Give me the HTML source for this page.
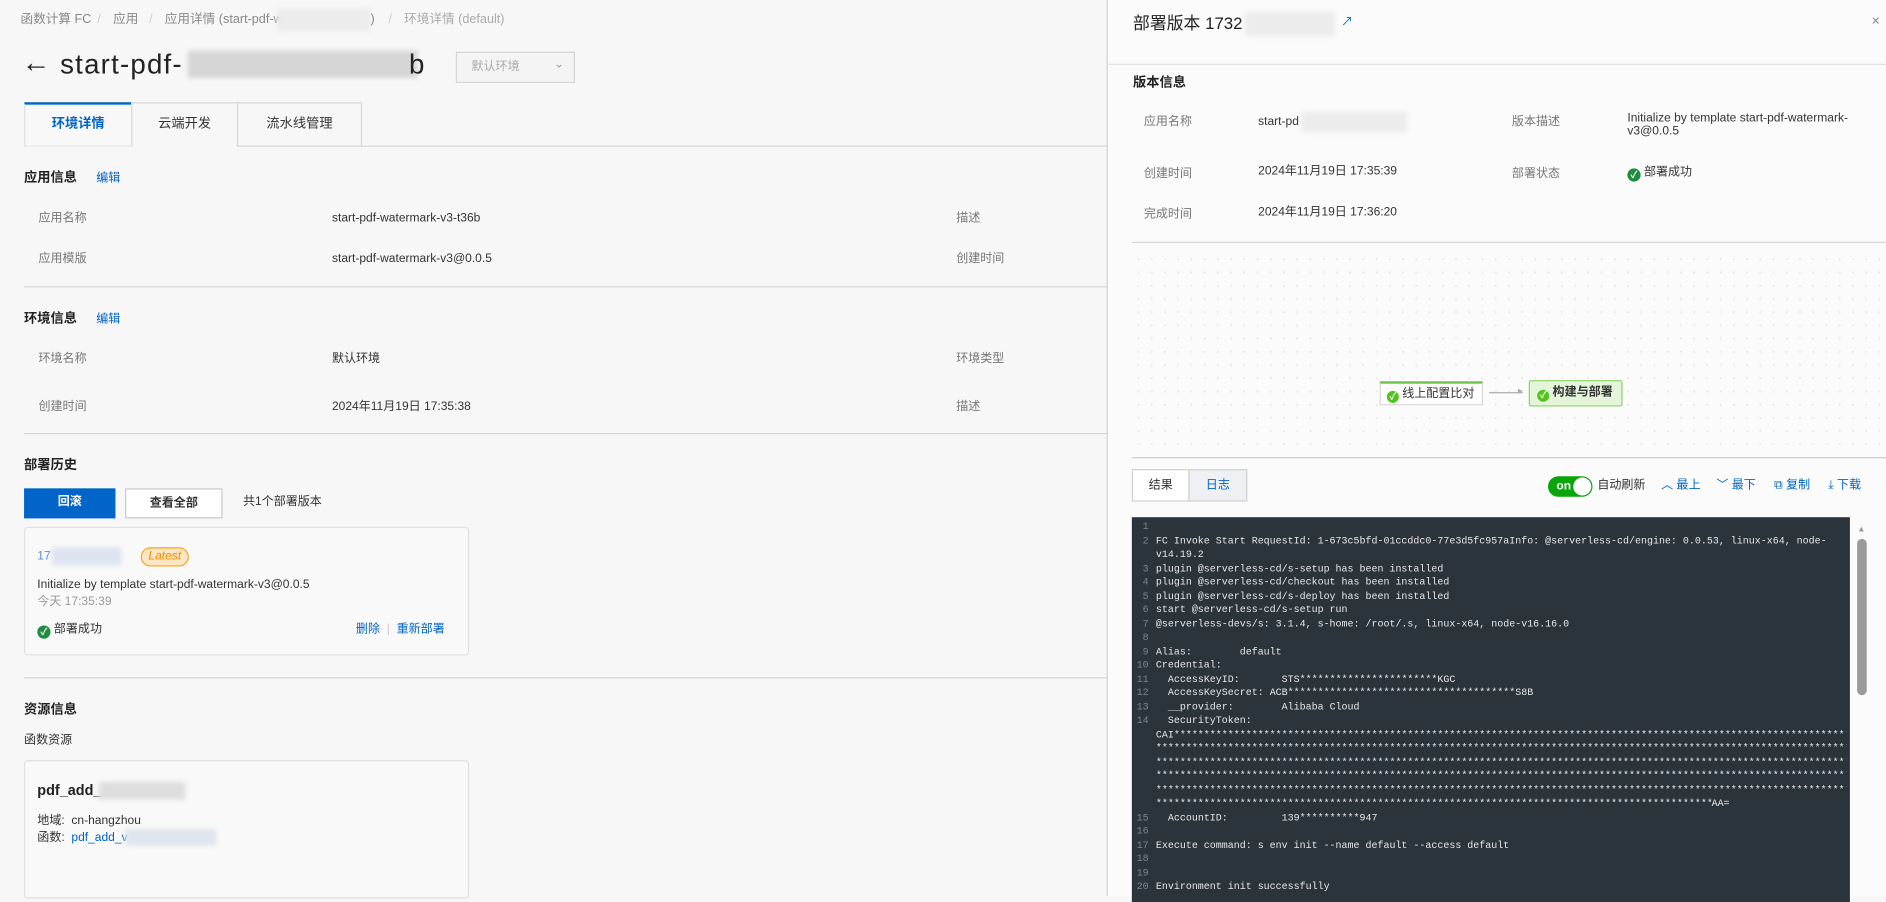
<!DOCTYPE html>
<html><head><meta charset="utf-8"><style>
*{box-sizing:border-box;margin:0;padding:0}
html,body{width:1886px;height:896px;overflow:hidden;background:#f7f7f7}
#s{position:absolute;left:0;top:0;width:1568px;height:745px;transform:scale(1.2028);transform-origin:0 0;font-family:"Liberation Sans","Noto Sans CJK SC",sans-serif;font-size:10px;line-height:1.4;color:#333}
.a{position:absolute;white-space:nowrap}
.g{color:#777}
.b{color:#0064c8}
.h{font-weight:bold;font-size:11px;color:#222}
.line{position:absolute;height:1px;background:#d6d6d6}
.blur{position:absolute;background:#e4e4e4;filter:blur(2px)}
.chk{display:inline-block;width:11px;height:11px;border-radius:50%;background:#1e8e3e;color:#fff;font-size:8px;line-height:11px;text-align:center;vertical-align:-2px;font-weight:bold}
#log{position:absolute;left:941px;top:430px;width:597px;height:320px;background:#2b343b;font-family:"Liberation Mono","Noto Sans CJK SC",monospace;font-size:8.3px;line-height:11.5px;color:#e8e8e8;padding-top:3px;overflow:hidden}
#log .r{display:flex}
#log .n{width:20px;text-align:right;padding-right:6px;color:#7d868c;flex:none}
#log .t{white-space:pre-wrap;word-break:break-all;width:562px}
#log .c{white-space:nowrap;overflow:hidden;width:574px}
.bc{position:absolute;top:9px;font-size:10.5px;color:#888;white-space:nowrap}
</style></head><body><div id="s">
<!-- left -->
<div class="bc" style="left:17px">函数计算 FC</div>
<div class="bc" style="left:81px;color:#ccc">/</div>
<div class="bc" style="left:94px">应用</div>
<div class="bc" style="left:124px;color:#ccc">/</div>
<div class="bc" style="left:137px">应用详情 (start-pdf-w</div>
<div class="blur" style="left:230px;top:7px;width:78px;height:19px;background:#ececec"></div>
<div class="bc" style="left:308px">)</div>
<div class="bc" style="left:323px;color:#ccc">/</div>
<div class="bc" style="left:336px;color:#aaa">环境详情 (default)</div>
<div class="a" style="left:18px;top:36px;font-size:24px;color:#222">&larr;</div>
<div class="a" style="left:50px;top:37px;font-size:23px;color:#222;letter-spacing:1px">start-pdf-</div>
<div class="blur" style="left:156px;top:42px;width:191px;height:23px;background:#d6d6d6"></div>
<div class="a" style="left:340px;top:37px;font-size:23px;color:#222">b</div>
<div class="a" style="left:379px;top:43px;width:99px;height:26px;border:1px solid #d4d4d4;background:#f4f4f4;color:#aaa;padding:7px 0 0 12px;line-height:1">默认环境<span style="position:absolute;right:8px;top:5px;color:#999">&#8964;</span></div>
<div class="line" style="left:301px;top:121px;width:619px"></div>
<div class="a" style="left:20px;top:85px;width:89px;height:37px;border-top:2px solid #0064c8;background:#f8f8f8;color:#0064c8;font-size:11px;font-weight:bold;padding-top:9px;text-align:center;border-left:1px solid #e0e0e0">环境详情</div>
<div class="a" style="left:109px;top:85px;width:89px;height:37px;border:1px solid #d6d6d6;border-bottom:none;font-size:11px;padding-top:10px;text-align:center">云端开发</div>
<div class="a" style="left:198px;top:85px;width:103px;height:37px;border:1px solid #d6d6d6;border-left:none;font-size:11px;padding-top:10px;text-align:center">流水线管理</div>
<div class="line" style="left:20px;top:121px;width:89px;background:#e6e6e6"></div>

<div class="a h" style="left:20px;top:141px">应用信息</div><div class="a b" style="left:80px;top:142px">编辑</div>
<div class="a g" style="left:32px;top:175px">应用名称</div><div class="a" style="left:276px;top:175px">start-pdf-watermark-v3-t36b</div><div class="a g" style="left:795px;top:175px">描述</div>
<div class="a g" style="left:32px;top:209px">应用模版</div><div class="a" style="left:276px;top:209px">start-pdf-watermark-v3@0.0.5</div><div class="a g" style="left:795px;top:209px">创建时间</div>
<div class="line" style="left:20px;top:238px;width:900px"></div>
<div class="a h" style="left:20px;top:258px">环境信息</div><div class="a b" style="left:80px;top:259px">编辑</div>
<div class="a g" style="left:32px;top:292px">环境名称</div><div class="a" style="left:276px;top:292px">默认环境</div><div class="a g" style="left:795px;top:292px">环境类型</div>
<div class="a g" style="left:32px;top:332px">创建时间</div><div class="a" style="left:276px;top:332px">2024年11月19日 17:35:38</div><div class="a g" style="left:795px;top:332px">描述</div>
<div class="line" style="left:20px;top:360px;width:900px"></div>
<div class="a h" style="left:20px;top:380px">部署历史</div>
<div class="a" style="left:20px;top:406px;width:76px;height:25px;background:#0064c8;color:#fff;font-weight:bold;text-align:center;padding-top:5px">回滚</div>
<div class="a" style="left:104px;top:406px;width:81px;height:25px;border:1px solid #c8c8c8;background:#fff;font-weight:bold;text-align:center;padding-top:5px">查看全部</div>
<div class="a" style="left:202px;top:411px">共1个部署版本</div>
<div class="a" style="left:20px;top:438px;width:370px;height:107px;border:1px solid #e0e0e0;border-radius:3px;background:#f9f9f9"></div>
<div class="a b" style="left:31px;top:456px;color:#5a8fd0">17</div><div class="blur" style="left:43px;top:455px;width:58px;height:15px;background:#dde4ef"></div>
<div class="a" style="left:117px;top:455px;width:40px;height:16px;border:1px solid #f5a623;border-radius:8px;background:#fde6c4;color:#f08c00;font-style:italic;text-align:center;line-height:14px">Latest</div>
<div class="a" style="left:31px;top:480px">Initialize by template start-pdf-watermark-v3@0.0.5</div>
<div class="a g" style="left:31px;top:494px;color:#999">今天 17:35:39</div>
<div class="a" style="left:31px;top:517px"><span class="chk">✓</span> 部署成功</div>
<div class="a b" style="left:296px;top:517px">删除 <span style="color:#ccc">&nbsp;|&nbsp;</span> 重新部署</div>
<div class="line" style="left:20px;top:563px;width:900px"></div>
<div class="a h" style="left:20px;top:583px">资源信息</div>
<div class="a" style="left:20px;top:609px">函数资源</div>
<div class="a" style="left:20px;top:632px;width:370px;height:115px;border:1px solid #e0e0e0;border-radius:3px;background:#f9f9f9"></div>
<div class="a" style="left:31px;top:649px;font-size:12px;font-weight:bold;color:#222">pdf_add_</div><div class="blur" style="left:82px;top:650px;width:72px;height:15px;background:#dedede"></div>
<div class="a" style="left:31px;top:676px">地域: &nbsp;cn-hangzhou</div>
<div class="a" style="left:31px;top:690px">函数: &nbsp;<span class="b">pdf_add_v</span></div><div class="blur" style="left:104px;top:689px;width:76px;height:14px;background:#dfe5ee"></div>

<!-- right panel -->
<div class="a" style="left:920px;top:0;width:648px;height:745px;background:#fbfbfb;border-left:1px solid #d0d0d0"></div>
<div class="a" style="left:942px;top:10px;font-size:14px;color:#222">部署版本 1732</div><div class="blur" style="left:1035px;top:10px;width:75px;height:20px;background:#ececec"></div>
<div class="a b" style="left:1115px;top:12px;font-size:10px">&#x2197;</div>
<div class="a" style="left:1556px;top:9px;font-size:12px;color:#888">×</div>
<div class="line" style="left:920px;top:53px;width:648px;background:#e0e0e0"></div>
<div class="a h" style="left:942px;top:62px">版本信息</div>
<div class="a g" style="left:951px;top:95px">应用名称</div><div class="a" style="left:1046px;top:95px">start-pd</div><div class="blur" style="left:1082px;top:93px;width:88px;height:17px;background:#ececec"></div>
<div class="a g" style="left:1257px;top:95px">版本描述</div><div class="a" style="left:1353px;top:93px;line-height:11px">Initialize by template start-pdf-watermark-<br>v3@0.0.5</div>
<div class="a g" style="left:951px;top:138px">创建时间</div><div class="a" style="left:1046px;top:136px">2024年11月19日 17:35:39</div>
<div class="a g" style="left:1257px;top:138px">部署状态</div><div class="a" style="left:1353px;top:137px"><span class="chk">✓</span> 部署成功</div>
<div class="a g" style="left:951px;top:172px">完成时间</div><div class="a" style="left:1046px;top:170px">2024年11月19日 17:36:20</div>
<div class="line" style="left:941px;top:201px;width:627px"></div>
<div class="a" style="left:941px;top:210px;width:627px;height:160px;background-image:radial-gradient(#e6e6e6 0.7px,transparent 1px);background-size:11px 11px"></div>
<div class="a" style="left:1147px;top:317px;width:86px;height:20px;border:1px solid #d8d8d8;border-top:2px solid #6cc24a;background:#fff;padding:2px 0 0 5px"><span class="chk" style="background:#52c41a;width:10px;height:10px;line-height:10px">✓</span> 线上配置比对</div>
<div class="a" style="left:1238px;top:326px;width:28px;height:1px;background:#aaa"></div><div class="a" style="left:1262px;top:319px;color:#aaa;font-size:8px">▸</div>
<div class="a" style="left:1271px;top:316px;width:78px;height:22px;border:1px solid #8fd16a;border-radius:2px;background:#e4f5da;padding:3px 0 0 6px;font-weight:bold"><span class="chk" style="background:#52c41a;width:10px;height:10px;line-height:10px">✓</span> 构建与部署</div>
<div class="line" style="left:941px;top:380px;width:627px;background:#ccc"></div>
<div class="a" style="left:941px;top:390px;width:48px;height:27px;border:1px solid #d0d0d0;background:#fff;text-align:center;padding-top:6px">结果</div>
<div class="a b" style="left:988px;top:390px;width:49px;height:27px;border:1px solid #d0d0d0;background:#eef0f4;text-align:center;padding-top:6px">日志</div>
<div class="a" style="left:1287px;top:396px;width:37px;height:17px;border-radius:9px;background:#0aa50a;color:#fff;font-weight:bold;padding:2px 0 0 7px;line-height:13px">on<span style="position:absolute;right:1px;top:1px;width:15px;height:15px;border-radius:50%;background:#fff"></span></div>
<div class="a" style="left:1328px;top:397px">自动刷新</div>
<div class="a b" style="left:1381px;top:397px">︿ 最上</div>
<div class="a b" style="left:1427px;top:397px">﹀ 最下</div>
<div class="a b" style="left:1475px;top:397px">⧉ 复制</div>
<div class="a b" style="left:1520px;top:397px">⤓ 下载</div>
<div id="log">
<div class="r"><span class="n">1</span><span class="t"> </span></div>
<div class="r"><span class="n">2</span><span class="t">FC Invoke Start RequestId: 1-673c5bfd-01ccddc0-77e3d5fc957aInfo: @serverless-cd/engine: 0.0.53, linux-x64, node-v14.19.2</span></div>
<div class="r"><span class="n">3</span><span class="t">plugin @serverless-cd/s-setup has been installed</span></div>
<div class="r"><span class="n">4</span><span class="t">plugin @serverless-cd/checkout has been installed</span></div>
<div class="r"><span class="n">5</span><span class="t">plugin @serverless-cd/s-deploy has been installed</span></div>
<div class="r"><span class="n">6</span><span class="t">start @serverless-cd/s-setup run</span></div>
<div class="r"><span class="n">7</span><span class="t">@serverless-devs/s: 3.1.4, s-home: /root/.s, linux-x64, node-v16.16.0</span></div>
<div class="r"><span class="n">8</span><span class="t"> </span></div>
<div class="r"><span class="n">9</span><span class="t">Alias:        default</span></div>
<div class="r"><span class="n">10</span><span class="t">Credential:</span></div>
<div class="r"><span class="n">11</span><span class="t">  AccessKeyID:       STS***********************KGC</span></div>
<div class="r"><span class="n">12</span><span class="t">  AccessKeySecret: ACB**************************************S8B</span></div>
<div class="r"><span class="n">13</span><span class="t">  __provider:        Alibaba Cloud</span></div>
<div class="r"><span class="n">14</span><span class="t">  SecurityToken:</span></div>
<div class="r"><span class="n"></span><span class="c">CAI************************************************************************************************************************************************</span></div>
<div class="r"><span class="n"></span><span class="c">********************************************************************************************************************************************************</span></div>
<div class="r"><span class="n"></span><span class="c">********************************************************************************************************************************************************</span></div>
<div class="r"><span class="n"></span><span class="c">********************************************************************************************************************************************************</span></div>
<div class="r"><span class="n"></span><span class="c">********************************************************************************************************************************************************</span></div>
<div class="r"><span class="n"></span><span class="t"><span style="display:inline-block;width:462px;overflow:hidden;vertical-align:top;white-space:nowrap">****************************************************************************************************************</span>AA=</span></div>
<div class="r"><span class="n">15</span><span class="t">  AccountID:         139**********947</span></div>
<div class="r"><span class="n">16</span><span class="t"> </span></div>
<div class="r"><span class="n">17</span><span class="t">Execute command: s env init --name default --access default</span></div>
<div class="r"><span class="n">18</span><span class="t"> </span></div>
<div class="r"><span class="n">19</span><span class="t"> </span></div>
<div class="r"><span class="n">20</span><span class="t">Environment init successfully</span></div>
</div>
<div class="a" style="left:1544px;top:448px;width:8px;height:130px;border-radius:4px;background:#9a9a9a"></div>
<div class="a" style="left:1544px;top:436px;font-size:7px;color:#999">▲</div>
</div></body></html>
